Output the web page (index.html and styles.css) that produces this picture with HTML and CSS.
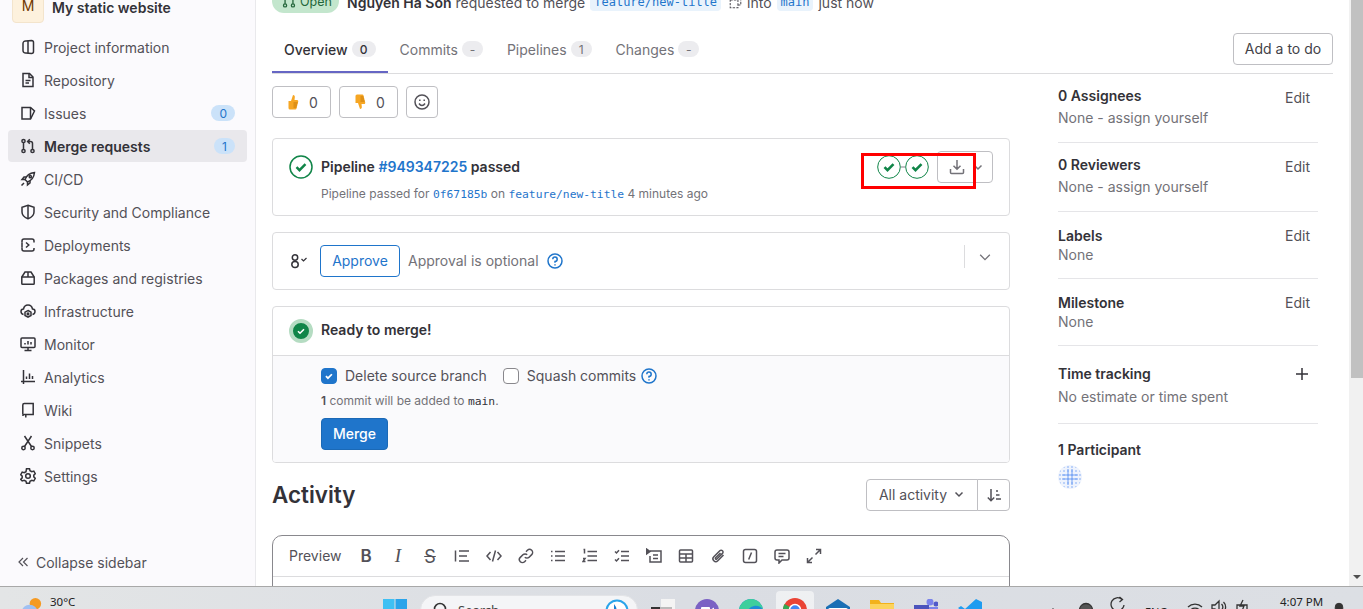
FILE: index.html
```html
<!DOCTYPE html>
<html lang="en">
<head>
<meta charset="utf-8">
<title>My static website</title>
<link rel="stylesheet" href="styles.css">
</head>
<body>
<div class="screen">
  <div class="app">
    <aside class="sidebar">
      <div class="project">
        <span class="project-avatar">M</span>
        <span class="project-name">My static website</span>
      </div>
      <nav class="nav">
        <a class="nav-item"><svg class="ic" viewBox="0 0 16 16"><path d="M6 2 11.500 1.500a2 2 0 0 1 2 2v9a2 2 0 0 1-2 2L6 14a2.500 2.500 0 0 1-3-2.500v-7A2.500 2.500 0 0 1 6 2z"/><path d="M8 1.800v12.400"/></svg><span>Project information</span></a>
        <a class="nav-item"><svg class="ic" viewBox="0 0 16 16"><path d="M3 1.500h6.500L13 5v9.500H3z"/><path d="M9 1.500V5.500h4M5.500 8.500h5M5.500 11h3.500"/></svg><span>Repository</span></a>
        <a class="nav-item"><svg class="ic" viewBox="0 0 16 16"><path d="M2 2.500h8.500l4 3.500-4 8H2z"/><path d="M10.500 2.500V14"/></svg><span>Issues</span><b class="nav-badge">0</b></a>
        <a class="nav-item active"><svg class="ic" viewBox="0 0 16 16"><circle cx="3.500" cy="3" r="1.600"/><circle cx="3.500" cy="13" r="1.600"/><circle cx="12.500" cy="13" r="1.600"/><path d="M3.500 4.600v6.800M12.500 11.400V5.500a2 2 0 0 0-2-2H8M9.800 1.300 7.600 3.500l2.200 2.200"/></svg><span>Merge requests</span><b class="nav-badge">1</b></a>
        <a class="nav-item"><svg class="ic" viewBox="0 0 16 16"><path d="M5 8.500C6.500 4.500 10 2 14.500 1.500 14 6 11.500 9.500 7.500 11z"/><circle cx="10.300" cy="5.700" r="1.100"/><path d="M5 8.500H2l2-2.500h2.500M7.500 11v3l2.500-2V9.500M1.500 14.500l2.500-2.500"/></svg><span>CI/CD</span></a>
        <a class="nav-item"><svg class="ic" viewBox="0 0 16 16"><path d="M8 1.200 14 3.200V8c0 3.200-2.800 5.600-6 6.800C4.800 13.600 2 11.200 2 8V3.200z"/><path d="M8 1.500v13"/></svg><span>Security and Compliance</span></a>
        <a class="nav-item"><svg class="ic" viewBox="0 0 16 16"><path d="M14 5.500V4a2 2 0 0 0-2-2H4a2 2 0 0 0-2 2v1.500M2 10.500V12a2 2 0 0 0 2 2h8a2 2 0 0 0 2-2v-1"/><path d="M2 5.500v5M6 5.500 8.800 8 6 10.500"/></svg><span>Deployments</span></a>
        <a class="nav-item"><svg class="ic" viewBox="0 0 16 16"><path d="M1.800 7 5 2h6l3.200 5v6.500a.8.800 0 0 1-.8.800H2.600a.8.800 0 0 1-.8-.800z"/><path d="M1.800 7h12.400M8 2v5"/></svg><span>Packages and registries</span></a>
        <a class="nav-item"><svg class="ic" viewBox="0 0 16 16"><path d="M3.500 11.500C1.500 11 1 9.500 1 8.500 1 7 2.200 6 3.500 6 4 3.500 6 2 8 2s4 1.500 4.500 4c1.300 0 2.500 1 2.500 2.500 0 1-.5 2.500-2.500 3"/><path d="M8 7.500l3 1.700v3.300l-3 1.700-3-1.700V9.200z"/><circle cx="8" cy="10.900" r=".8"/></svg><span>Infrastructure</span></a>
        <a class="nav-item"><svg class="ic" viewBox="0 0 16 16"><rect x="1" y="2" width="14" height="9.500" rx="1"/><path d="M5 8.500V7M8 8.500V5M11 8.500V6M8 11.500V14M4.500 14.500h7"/></svg><span>Monitor</span></a>
        <a class="nav-item"><svg class="ic" viewBox="0 0 16 16"><path d="M3.500 1v14M1 12.500h14M6.500 10V7.500M9.500 10V4.500M12.500 10V7"/></svg><span>Analytics</span></a>
        <a class="nav-item"><svg class="ic" viewBox="0 0 16 16"><path d="M2.800 12.500V3a1.500 1.500 0 0 1 1.500-1.500h8.900v11H4.300a1.500 1.500 0 0 0-1.500 1.500"/><path d="M5.800 12.500v3"/></svg><span>Wiki</span></a>
        <a class="nav-item"><svg class="ic" viewBox="0 0 16 16"><circle cx="3.500" cy="13" r="1.700"/><circle cx="12.500" cy="13" r="1.700"/><path d="M4.500 11.500 11.500 1M11.500 11.500 4.500 1"/></svg><span>Snippets</span></a>
        <a class="nav-item"><svg class="ic" viewBox="0 0 16 16"><path d="M6.500 1.200h3l.5 2 1.800 1 2-.6 1.500 2.600-1.500 1.400v1.800l1.500 1.400-1.500 2.600-2-.6-1.800 1-.5 2h-3l-.5-2-1.800-1-2 .6L.7 11.800l1.500-1.400V8.600L.7 7.200l1.500-2.600 2 .6 1.800-1z" transform="translate(0 -.5)"/><circle cx="8" cy="8" r="2.300"/></svg><span>Settings</span></a>
      </nav>
      <div class="collapse"><svg class="ic-sm" viewBox="0 0 12 12"><path d="M6 2 2 6l4 4M10.500 2l-4 4 4 4"/></svg><span>Collapse sidebar</span></div>
    </aside>

    <main class="main">
      <div class="mr-head">
        <span class="status"><svg class="ic-st" viewBox="0 0 16 16"><circle cx="3.500" cy="13" r="1.800"/><circle cx="12.500" cy="13" r="1.800"/><path d="M3.500 11V3M12.500 11V3"/></svg>Open</span>
        <strong class="author">Nguyen Ha Son</strong>
        <span class="req">requested to merge</span>
        <code class="chip">feature/new-title</code>
        <svg class="ic-copy" viewBox="0 0 16 16"><path d="M5 4.500V1.500h9.500V11H11"/><rect x="1.500" y="5" width="9.500" height="9.500"/></svg>
        <span>into</span>
        <code class="chip">main</code>
        <span>just now</span>
      </div>

      <div class="tabs">
        <a class="tab current">Overview<b class="count">0</b></a>
        <a class="tab">Commits<b class="count">-</b></a>
        <a class="tab">Pipelines<b class="count">1</b></a>
        <a class="tab">Changes<b class="count">-</b></a>
        <button class="btn todo">Add a to do</button>
      </div>

      <div class="columns">
        <div class="content">
          <div class="awards">
            <button class="btn award"><svg class="emoji" viewBox="0 0 16 16"><path fill="#f6a623" d="M3.500 7h2.500l2-6c1.500 0 2 1.200 1.800 2.500L9.500 6h2.500c1 0 1.500 1 1.200 1.800L11.500 14.500a1.300 1.300 0 0 1-1.200 1H5a1.500 1.500 0 0 1-1.500-1.500z"/><path stroke="#c77a0a" fill="none" d="M8.500 9h4M8.500 11h3.500M8.500 13h3"/></svg>0</button>
            <button class="btn award"><svg class="emoji" viewBox="0 0 16 16"><path fill="#f6a623" d="M3.500 9h2.500l2 6c1.500 0 2-1.200 1.800-2.500L9.500 10h2.500c1 0 1.500-1 1.200-1.800L11.500 1.500a1.300 1.300 0 0 0-1.200-1H5A1.500 1.500 0 0 0 3.500 2z"/><path stroke="#c77a0a" fill="none" d="M8.500 7h4M8.500 5h3.500M8.500 3h3"/></svg>0</button>
            <button class="btn smile"><svg class="ic" viewBox="0 0 16 16"><circle cx="8" cy="8" r="7"/><path d="M5 9.500c.8 1.300 1.800 2 3 2s2.200-.7 3-2"/><path d="M5.800 5.500v1.500M10.200 5.500v1.500"/></svg></button>
          </div>

          <section class="card pipeline">
            <svg class="status-lg" viewBox="0 0 24 24"><circle cx="12" cy="12" r="11" fill="#fff" stroke="#108548" stroke-width="1.500"/><path d="M7.500 12.200l3 3 6-6" fill="none" stroke="#108548" stroke-width="2.400"/></svg>
            <div class="pipeline-text">
              <div class="pipeline-title">Pipeline <a class="link">#949347225</a> passed</div>
              <div class="pipeline-sub">Pipeline passed for <code class="mono link">0f67185b</code> on <code class="mono link">feature/new-title</code> 4 minutes ago</div>
            </div>
            <div class="stages">
              <svg class="stage" viewBox="0 0 24 24"><circle cx="12" cy="12" r="11.300" fill="#fff" stroke="#108548"/><path d="M7.500 12.200l3 3 6-6" fill="none" stroke="#108548" stroke-width="2.600"/></svg>
              <span class="stage-link"></span>
              <svg class="stage" viewBox="0 0 24 24"><circle cx="12" cy="12" r="11.300" fill="#fff" stroke="#108548"/><path d="M7.500 12.200l3 3 6-6" fill="none" stroke="#108548" stroke-width="2.600"/></svg>
              <button class="btn download"><svg class="ic" viewBox="0 0 16 16"><path d="M8 1v9M4.500 6.800 8 10.300l3.500-3.500M1.500 10v3.500a1 1 0 0 0 1 1h11a1 1 0 0 0 1-1V10"/></svg><svg class="ic-xs" viewBox="0 0 12 12"><path d="M2.500 4.500 6 8l3.500-3.500"/></svg></button>
            </div>
            <span class="annotation"></span>
          </section>

          <section class="card approve">
            <svg class="ic approver" viewBox="0 0 18 16"><circle cx="5" cy="4.500" r="2.700"/><rect x="1.800" y="8.500" width="6.400" height="6" rx="3"/><path d="M11.500 6l2 2 3-3" stroke-width="1.200"/></svg>
            <button class="btn outline">Approve</button>
            <span class="muted">Approval is optional</span>
            <svg class="help help-a" viewBox="0 0 16 16"><circle cx="8" cy="8" r="7"/><path d="M5.800 6.200A2.200 2.200 0 1 1 8 8.500v1.200M8 11.300v1.200"/></svg>
            <span class="approve-end"><span class="divider"></span><svg class="ic chev" viewBox="0 0 16 16"><path d="M2.500 5.500 8 11l5.500-5.500"/></svg></span>
          </section>

          <section class="card merge">
            <div class="merge-head">
              <span class="ready"><svg viewBox="0 0 16 16"><path d="M5 8.200l2 2 4-4" fill="none" stroke="#fff" stroke-width="1.600"/></svg></span>
              <strong>Ready to merge!</strong>
            </div>
            <div class="merge-body">
              <div class="options">
                <span class="checkbox checked"><svg viewBox="0 0 16 16"><path d="M4.500 8.200l2.300 2.300 4.500-4.500" fill="none" stroke="#fff" stroke-width="2"/></svg></span>
                <label class="opt">Delete source branch</label>
                <span class="checkbox"></span>
                <label class="opt tight">Squash commits</label>
                <svg class="help" viewBox="0 0 16 16"><circle cx="8" cy="8" r="7"/><path d="M5.800 6.200A2.200 2.200 0 1 1 8 8.500v1.200M8 11.300v1.200"/></svg>
              </div>
              <p class="commit-note"><b>1</b> commit will be added to <code class="mono-dark">main</code>.</p>
              <button class="btn primary">Merge</button>
            </div>
          </section>

          <div class="activity">
            <h2>Activity</h2>
            <div class="filter">
              <button class="btn filter-l">All activity<svg class="ic-xs" viewBox="0 0 12 12"><path d="M2.500 4.500 6 8l3.500-3.500"/></svg></button>
              <button class="btn filter-r"><svg class="ic" viewBox="0 0 16 16"><path d="M5 2v12M1.800 10.500 5 13.700l3.200-3.200M10 4h2M10 8h3.500M10 12h5"/></svg></button>
            </div>
          </div>

          <section class="editor">
            <div class="toolbar">
              <span class="preview">Preview</span>
              <span class="tool tx-b">B</span>
              <span class="tool tx-i">I</span>
              <span class="tool tx-s">S</span>
              <span class="tool"><svg class="ic" viewBox="0 0 16 16"><path d="M1.500 2.500v11M5 3h10M5 8h8M5 13h10"/></svg></span>
              <span class="tool"><svg class="ic" viewBox="0 0 16 16"><path d="M4.500 4 1 8l3.500 4M11.500 4 15 8l-3.500 4M9.500 2.500l-3 11"/></svg></span>
              <span class="tool"><svg class="ic" viewBox="0 0 16 16"><path d="M6.800 9.200a3 3 0 0 0 4.300 0l2.600-2.600a3 3 0 0 0-4.300-4.300L8 3.700M9.200 6.800a3 3 0 0 0-4.300 0L2.300 9.400a3 3 0 0 0 4.300 4.300L8 12.300"/></svg></span>
              <span class="tool"><svg class="ic" viewBox="0 0 16 16"><path d="M1 3.500h1.500M1 8h1.500M1 12.500h1.500M5 3.500h10M5 8h10M5 12.500h10"/></svg></span>
              <span class="tool"><svg class="ic" viewBox="0 0 16 16"><path d="M1.500 1.500h1v4M1 10.500h2L1 13.500h2.500M5.500 3.500H15M5.500 8H15M5.500 12.500H15"/></svg></span>
              <span class="tool"><svg class="ic" viewBox="0 0 16 16"><path d="M1 3.500l1.500 1.500L5 2.200M1 11.500l1.500 1.500L5 10.200M7 3.500h8M7 8h8M7 12.500h8"/></svg></span>
              <span class="tool"><svg class="ic" viewBox="0 0 16 16"><path d="M4 3h11v11H4V8M7 7h5M7 10.500h5"/><path d="M.5 1v5L4 3.500z" fill="currentColor"/></svg></span>
              <span class="tool"><svg class="ic" viewBox="0 0 16 16"><rect x="1.500" y="2" width="13" height="12" rx="1"/><path d="M1.500 6h13M1.500 10h13M8 6v8"/></svg></span>
              <span class="tool"><svg class="ic" viewBox="0 0 16 16"><path d="M13.500 7 7.800 12.800a2.800 2.800 0 0 1-4-4l6-6a1.800 1.800 0 0 1 2.700 2.600L6.800 11a.8.800 0 0 1-1.200-1.200L10.500 5"/></svg></span>
              <span class="tool"><svg class="ic" viewBox="0 0 16 16"><rect x="1.500" y="1.500" width="13" height="13" rx="2"/><path d="M9.500 4.500l-2.800 7"/></svg></span>
              <span class="tool"><svg class="ic" viewBox="0 0 16 16"><path d="M3 2h10a2 2 0 0 1 2 2v6a2 2 0 0 1-2 2H8l-3 3v-3H3a2 2 0 0 1-2-2V4a2 2 0 0 1 2-2zM4.500 5.500h7M4.500 8.500h5"/></svg></span>
              <span class="tool"><svg class="ic" viewBox="0 0 16 16"><path d="M9.500 6.500 14.500 1.500M10 1.500h4.500V6M6.500 9.500l-5 5M6 14.500H1.500V10"/></svg></span>
            </div>
          </section>
        </div>

        <aside class="side">
          <div class="side-sec s1"><div class="side-row"><strong>0 Assignees</strong><a class="edit low">Edit</a></div><div class="side-sub tall">None - assign yourself</div></div>
          <div class="side-sec s1"><div class="side-row"><strong>0 Reviewers</strong><a class="edit low">Edit</a></div><div class="side-sub tall">None - assign yourself</div></div>
          <div class="side-sec s2"><div class="side-row"><strong>Labels</strong><a class="edit">Edit</a></div><div class="side-sub">None</div></div>
          <div class="side-sec s2"><div class="side-row"><strong>Milestone</strong><a class="edit">Edit</a></div><div class="side-sub">None</div></div>
          <div class="side-sec s3"><div class="side-row"><strong>Time tracking</strong><svg class="ic plus" viewBox="0 0 16 16"><path d="M8 2v12M2 8h12"/></svg></div><div class="side-sub taller">No estimate or time spent</div></div>
          <div class="side-sec s4"><div class="side-row"><strong>1 Participant</strong></div>
            <svg class="identicon" viewBox="0 0 24 24"><defs><pattern id="dots" width="4" height="4" patternUnits="userSpaceOnUse"><circle cx="2" cy="2" r="1" fill="#a9c6f8"/></pattern></defs><circle cx="12" cy="12" r="12" fill="#eef3fd"/><circle cx="12" cy="12" r="11.500" fill="url(#dots)"/><path d="M10 4v16M14 4v16M4 10h16M4 14h16" stroke="#6e9ef3" stroke-width="1"/></svg>
          </div>
        </aside>
      </div>
    </main>

    <div class="scrollbar">
      <div class="thumb"></div>
      <div class="track"><span class="arrow"></span></div>
    </div>
  </div>

  <footer class="taskbar">
    <div class="weather">
      <svg class="tb-ic" viewBox="0 0 24 24"><circle cx="15" cy="7" r="6" fill="#f59a23"/><ellipse cx="9" cy="15" rx="8" ry="7" fill="#9fc0f2"/></svg>
      <span>30°C</span>
    </div>
    <div class="tb-center">
      <svg class="tb-ic win" viewBox="0 0 24 24"><rect width="11.500" height="11.500" fill="#3fc0f3"/><rect x="12.500" width="11.500" height="11.500" fill="#2aa4ea"/><rect y="12.500" width="11.500" height="11.500" fill="#1f8fe0"/><rect x="12.500" y="12.500" width="11.500" height="11.500" fill="#1a7fd4"/></svg>
      <div class="search">
        <svg class="search-ic" viewBox="0 0 16 16"><circle cx="7" cy="7" r="5.500"/><path d="M11 11l4 4"/></svg>
        <span>Search</span>
        <svg class="bing" viewBox="0 0 24 24"><circle cx="12" cy="12" r="10.500" fill="#fff" stroke="#2aa4ea" stroke-width="2"/><path d="M9 5v12l6-3-3-2-1-4z" fill="#1a7fd4"/></svg>
      </div>
      <svg class="tb-ic" viewBox="0 0 24 24"><rect x="10" y="0" width="14" height="16" fill="#f4f4f4"/><rect x="0" y="8" width="11" height="16" fill="#333"/><rect x="9" y="8" width="12" height="14" fill="#bbb"/></svg>
      <svg class="tb-ic" viewBox="0 0 24 24"><circle cx="12" cy="12" r="12" fill="#7b61c4"/><rect x="6" y="8" width="9" height="8" rx="1" fill="#fff"/><path d="M15 11l4-2.500v7L15 13z" fill="#fff"/></svg>
      <svg class="tb-ic" viewBox="0 0 24 24"><circle cx="12" cy="12" r="12" fill="#1f8dd6"/><path d="M0 12A12 12 0 0 1 24 12c0-3-4-6-9-5S6 13 10 18" fill="#3ecf9c"/></svg>
      <span class="tb-active"><svg class="tb-ic chrome" viewBox="0 0 24 24"><circle cx="12" cy="12" r="12" fill="#ea4335"/><path d="M12 12 1.600 6A12 12 0 0 0 12 24z" fill="#34a853"/><path d="M12 12h12A12 12 0 0 1 12 24z" fill="#fbbc04"/><circle cx="12" cy="12" r="5.500" fill="#4285f4" stroke="#fff" stroke-width="1.500"/></svg></span>
      <svg class="tb-ic" viewBox="0 0 24 24"><path d="M12 0 24 8v16H0V8z" fill="#1a6fb5"/><path d="M2 9h20L12 15z" fill="#fff"/></svg>
      <svg class="tb-ic" viewBox="0 0 24 24"><path d="M0 1h9l2 3h13v20H0z" fill="#f2b21b"/><rect y="5" width="24" height="19" fill="#fcd35c"/></svg>
      <svg class="tb-ic" viewBox="0 0 24 24"><circle cx="16" cy="3" r="3.500" fill="#7b83eb"/><circle cx="22" cy="5" r="2.500" fill="#5059c9"/><rect x="0" y="6" width="15" height="18" fill="#4b53bc"/><rect x="15" y="8" width="9" height="16" fill="#7b83eb"/></svg>
      <svg class="tb-ic" viewBox="0 0 24 24"><path d="M18 0 24 3v18l-6 3L7 14l-4 3-3-2 4-3-4-3 3-2 4 3z" fill="#1f9cf0"/></svg>
    </div>
    <div class="tray">
      <svg class="tray-ic caret" viewBox="0 0 16 16"><path d="M3 10l5-5 5 5"/></svg>
      <svg class="tray-ic wide1" viewBox="0 0 16 16"><circle cx="8" cy="9" r="6.500" fill="#555"/></svg>
      <svg class="tray-ic wide2" viewBox="0 0 16 16"><path d="M14 9A6.500 6.500 0 1 1 12 3.500M9.500 1l3 2.500-3 2.500"/></svg>
      <span class="eng">ENG</span>
      <svg class="tray-ic wifi" viewBox="0 0 16 16"><path d="M1 7a10 10 0 0 1 14 0M3.500 10a6.500 6.500 0 0 1 9 0"/></svg>
      <svg class="tray-ic vol" viewBox="0 0 16 16"><path d="M1 6h3l4-4v12l-4-4H1zM10.500 5a4 4 0 0 1 0 6M12.500 3a7 7 0 0 1 0 10"/></svg>
      <svg class="tray-ic bat" viewBox="0 0 16 16"><path d="M2 6h10v8H2zM8 1 5 7h4l-2 5"/></svg>
      <span class="clock">4:07 PM</span>
      <svg class="tray-ic bell" viewBox="0 0 16 16"><path d="M8 3a5 5 0 0 0-5 5v5h10V8a5 5 0 0 0-5-5z" fill="#333"/></svg>
    </div>
  </footer>
</div>
</body>
</html>
```

FILE: styles.css
```css
* { box-sizing: border-box; }
html, body { margin: 0; padding: 0; height: 100%; overflow: hidden; background: #fff; }
body { font-family: "Inter", "Noto Sans", sans-serif; font-size: 14px; color: #333238; }
a { color: inherit; text-decoration: none; }
button { font: inherit; cursor: pointer; }
h2, p { margin: 0; }

.screen { width: 1363px; height: 609px; display: flex; flex-direction: column; overflow: hidden; }
.app { flex: 0 0 586px; height: 586px; display: flex; overflow: hidden; }

.ic { width: 16px; height: 16px; flex: none; fill: none; stroke: currentColor; stroke-width: 1.5; }
.ic-xs { width: 12px; height: 12px; flex: none; fill: none; stroke: currentColor; stroke-width: 1.5; }
.ic-sm { width: 12px; height: 12px; flex: none; fill: none; stroke: currentColor; stroke-width: 1.2; }

/* left navigation */
.sidebar { flex: 0 0 256px; display: flex; flex-direction: column; background: #fbfafd; border-right: 1px solid #e9e9ec; }
.project { display: flex; align-items: center; gap: 8px; margin: -9px 0 0 12px; height: 32px; }
.project-avatar { width: 32px; height: 32px; display: flex; align-items: center; justify-content: center; background: #fdf1dd; border: 1px solid #f3e4cc; border-radius: 4px; color: #703800; font-size: 14px; padding-bottom: 3px; }
.project-name { font-weight: 600; }
.nav { display: flex; flex-direction: column; gap: 1px; margin: 8px 8px 0; }
.nav-item { height: 32px; display: flex; align-items: center; gap: 8px; padding: 0 12px; border-radius: 4px; color: #535158; }
.nav-item .ic { color: #333238; }
.nav-item.active { background: #e9e8ec; color: #333238; font-weight: 600; }
.nav-badge { margin-left: auto; min-width: 21px; height: 16px; padding: 0 8px; display: flex; align-items: center; justify-content: center; border-radius: 8px; background: #cbe2f9; color: #1f75cb; font-size: 12px; font-weight: 400; }
.collapse { margin-top: auto; height: 48px; display: flex; align-items: center; gap: 6px; padding-left: 17px; color: #535158; }
.collapse .ic-sm { color: #535158; margin-right: 1px; }

/* main column */
.main { flex: 0 0 1093px; width: 1093px; padding: 0 16px; display: flex; flex-direction: column; overflow: hidden; }
.mr-head { flex: none; height: 24px; margin-top: -11px; margin-bottom: 20px; display: flex; align-items: center; gap: 5px; color: #535158; white-space: nowrap; padding-top: 2px; }
.status { height: 24px; margin-top: -2px; width: 67px; flex: none; display: flex; align-items: center; gap: 4px; padding-left: 10px; border-radius: 12px; background: #c3e6cd; color: #24663b; font-size: 12.5px; }
.ic-st { width: 14px; height: 14px; fill: none; stroke: #24663b; stroke-width: 1.5; }
.author { margin-left: 3px; font-weight: 600; color: #333238; }
.req { margin-left: -1px; }
.chip { height: 18px; padding: 0 4px; border-radius: 4px; background: #e9f3fc; color: #1f75cb; font-family: "DejaVu Sans Mono", monospace; font-size: 12px; line-height: 18px; }
.ic-copy { width: 13px; height: 13px; margin: 0 0 0 3px; fill: none; stroke: #535158; stroke-width: 1.3; stroke-dasharray: 3 1.500; }

.tabs { flex: none; height: 41px; display: flex; align-items: flex-start; border-bottom: 1px solid #dcdcde; }
.tab { height: 40px; display: flex; align-items: center; gap: 4px; padding: 0 12px 8px; color: #737278; }
.tab.current { color: #333238; font-weight: 500; border-bottom: 2px solid #6666c4; padding-bottom: 6px; }
.count { min-width: 21px; height: 16px; padding: 0 6px; border-radius: 8px; background: #ececef; color: #737278; font-size: 12px; font-weight: 400; display: flex; align-items: center; justify-content: center; }
.current .count { min-width: 24px; color: #333238; font-weight: 500; }
.btn { background: #fff; border: 1px solid #bfbfc3; border-radius: 4px; color: #333238; padding: 0; display: flex; align-items: center; justify-content: center; }
.todo { width: 100px; height: 32px; margin: 0 0 0 auto; padding-bottom: 2px; color: #434248; }

.columns { flex: none; display: flex; gap: 48px; }
.content { flex: 0 0 738px; padding-top: 12px; }

.awards { display: flex; gap: 8px; height: 32px; }
.award { width: 59px; height: 32px; gap: 8px; color: #535158; }
.emoji { width: 16px; height: 16px; }
.smile { width: 32px; height: 32px; color: #535158; }

.card { border: 1px solid #dcdcde; border-radius: 4px; background: #fff; position: relative; display: flex; }
.pipeline { height: 78px; margin-top: 20px; padding: 16px 16px 0; }
.status-lg { width: 24px; height: 24px; flex: none; }
.pipeline-text { margin-left: 8px; padding-top: 2px; }
.pipeline-title { height: 20px; line-height: 20px; font-weight: 600; color: #333238; }
.link { color: #1f75cb; }
.pipeline-sub { margin-top: 8px; height: 18px; line-height: 18px; font-size: 12px; color: #737278; white-space: nowrap; }
.mono { font-family: "DejaVu Sans Mono", monospace; font-size: 11.3px; }
.stages { margin-left: auto; display: flex; align-items: flex-start; margin-top: -4px; }
.stage { width: 24px; height: 24px; margin-top: 4px; flex: none; }
.stage-link { width: 4px; height: 2px; margin-top: 15px; background: #bfbfc3; }
.download { width: 56px; height: 32px; margin-left: 8px; gap: 7px; justify-content: flex-start; padding-left: 11px; color: #737278; }
.annotation { position: absolute; left: 588px; top: 14px; width: 115px; height: 36px; border: 3px solid #f00; }

.approve { height: 58px; margin-top: 16px; align-items: center; padding: 0 16px; }
.approver { width: 18px; color: #333238; margin-left: 1px; }
.outline { width: 80px; height: 32px; margin-left: 12px; padding-bottom: 2px; border-color: #1f75cb; color: #1f75cb; }
.muted { margin-left: 8px; padding-bottom: 2px; color: #737278; }
.help { width: 16px; height: 16px; margin-left: 7px; fill: none; stroke: #1f75cb; stroke-width: 1.5; flex: none; }
.help-a { margin-left: 8px; }
.approve-end { margin-left: auto; margin-right: 1px; display: flex; align-items: center; align-self: flex-start; padding-top: 12px; }
.divider { width: 1px; height: 23px; background: #dcdcde; }
.chev { width: 14px; height: 14px; margin: 0 0 0 13px; color: #737278; stroke-width: 1.5; }

.merge { height: 157px; margin-top: 16px; flex-direction: column; overflow: hidden; }
.merge-head { height: 49px; flex: none; display: flex; align-items: center; gap: 8px; padding-left: 16px; border-bottom: 1px solid #dcdcde; }
.merge-head strong { font-weight: 600; padding-bottom: 3px; }
.ready { width: 24px; height: 24px; border-radius: 50%; background: #108548; border: 4px solid #b5dcc2; display: flex; }
.merge-body { flex: 1; background: #fafafc; padding: 10px 0 0 48px; }
.options { display: flex; align-items: center; height: 20px; }
.checkbox { width: 16px; height: 16px; border: 1px solid #89888d; border-radius: 4px; background: #fff; flex: none; display: flex; }
.checkbox.checked { background: #1f75cb; border-color: #1f75cb; }
.opt { margin: 0 16px 0 8px; padding-bottom: 2px; color: #535158; }
.opt.tight { margin-right: -2px; }
.commit-note { margin-top: 6px; height: 18px; line-height: 18px; font-size: 12px; color: #737278; }
.commit-note b { font-weight: 600; color: #535158; }
.mono-dark { font-family: "DejaVu Sans Mono", monospace; font-size: 11.3px; color: #333238; }
.primary { width: 67px; height: 32px; margin-top: 8px; padding-bottom: 2px; background: #1f75cb; border-color: #1b69b6; color: #fff; font-weight: 500; }

.activity { margin-top: 16px; height: 32px; display: flex; align-items: center; justify-content: space-between; }
.activity h2 { font-size: 22.4px; font-weight: 600; color: #333238; padding-bottom: 2px; }
.filter { display: flex; }
.filter-l { width: 112px; height: 32px; gap: 6px; padding-bottom: 2px; border-radius: 4px 0 0 4px; color: #535158; }
.filter-r { width: 33px; height: 32px; margin-left: -1px; border-radius: 0 4px 4px 0; color: #535158; }

.editor { margin-top: 24px; height: 90px; border: 1px solid #89888d; border-radius: 10px 10px 0 0; }
.toolbar { height: 41px; display: flex; align-items: center; padding-left: 16px; border-bottom: 1px solid #dcdcde; color: #535158; }
.preview { width: 61px; flex: none; padding-bottom: 2px; color: #535158; }
.tool { width: 32px; height: 32px; flex: none; display: flex; align-items: center; justify-content: center; }
.tx-b { font-size: 17px; font-weight: 600; }
.tx-i { font-family: "Liberation Serif", serif; font-style: italic; font-size: 19px; }
.tx-s { font-size: 18px; text-decoration: line-through; }

/* right column */
.side { flex: 0 0 260px; }
.side-sec { border-bottom: 1px solid #e5e5e8; }
.side-sec.s1 { padding: 12px 0 12px; }
.side-sec.s2 { padding: 14px 0 14px; }
.side-sec.s3 { padding: 18px 0 13px; }
.side-sec.s4 { padding: 16px 0 0; border-bottom: 0; }
.side-row { height: 20px; display: flex; align-items: flex-start; justify-content: space-between; padding-right: 8px; line-height: 20px; }
.side-row strong { font-weight: 600; }
.edit { color: #535158; }
.edit.low { margin-top: 2px; }
.side-sub { height: 18px; line-height: 18px; color: #737278; }
.side-sub.tall { height: 24px; line-height: 24px; }
.side-sub.taller { height: 26px; line-height: 26px; }
.plus { margin-top: 2px; color: #333238; }
.identicon { width: 24px; height: 24px; margin-top: 5px; display: block; }

/* page scrollbar */
.scrollbar { flex: 0 0 14px; display: flex; flex-direction: column; background: #f1f1f1; }
.thumb { height: 378px; margin-left: 2px; background: #c1c1c1; }
.track { flex: 1; display: flex; justify-content: center; align-items: flex-end; padding: 0 0 7px 1px; }
.arrow { border-left: 4px solid transparent; border-right: 4px solid transparent; border-top: 4px solid #505050; }

/* desktop taskbar */
.taskbar { flex: 0 0 23px; height: 23px; display: flex; align-items: flex-start; padding-left: 21px; background: linear-gradient(90deg, #e3e5e6, #dadde3 50%, #dcdfe4); border-top: 1px solid #a8a8a8; overflow: hidden; font-family: "Noto Sans", sans-serif; font-size: 11.5px; color: #222; }
.weather { display: flex; gap: 6px; flex: none; width: 54px; white-space: nowrap; }
.weather .tb-ic { margin-top: 10px; width: 23px; height: 23px; }
.weather span { margin-top: 7px; line-height: 16px; }
.tb-center { display: flex; align-items: flex-start; gap: 20px; margin-left: 308px; flex: none; }
.tb-ic { width: 24px; height: 24px; margin-top: 12px; flex: none; }
.search { width: 218px; height: 30px; margin: 8px -7px 0 -7px; padding: 0 8px 0 12px; display: flex; align-items: flex-start; background: #f4f5f7; border: 1px solid #e3e4e7; border-radius: 15px; flex: none; font-size: 13px; color: #444; }
.search-ic { width: 16px; height: 16px; margin-top: 6px; fill: none; stroke: #333; stroke-width: 1.6; flex: none; }
.search span { margin: 5px 0 0 9px; line-height: 18px; }
.bing { width: 24px; height: 24px; margin: 3px 0 0 auto; }
.tb-active { width: 38px; height: 30px; margin: 4px -8px 0 -7px; padding-left: 7px; background: rgba(255,255,255,.55); border-radius: 4px 4px 0 0; flex: none; }
.tb-active .chrome { margin-top: 7px; }
.tray { display: flex; align-items: flex-start; flex: none; margin-left: 63px; }
.tray-ic { width: 16px; height: 16px; flex: none; fill: none; stroke: #333; stroke-width: 1.3; margin-top: 15px; }
.caret { margin-right: 17px; margin-top: 17px; }
.wide1 { margin-right: 16px; margin-top: 14px; }
.wide2 { margin-right: 19px; margin-top: 9px; }
.eng { width: 42px; margin-top: 18px; line-height: 14px; font-size: 11px; }
.wifi { margin-top: 13px; margin-right: 8px; }
.vol { margin-top: 12px; margin-right: 8px; }
.bat { margin-top: 12px; }
.clock { margin: 7px 0 0 29px; line-height: 16px; width: 53px; white-space: nowrap; font-size: 11.5px; }
.bell { margin-top: 14px; width: 12px; height: 12px; }
```
